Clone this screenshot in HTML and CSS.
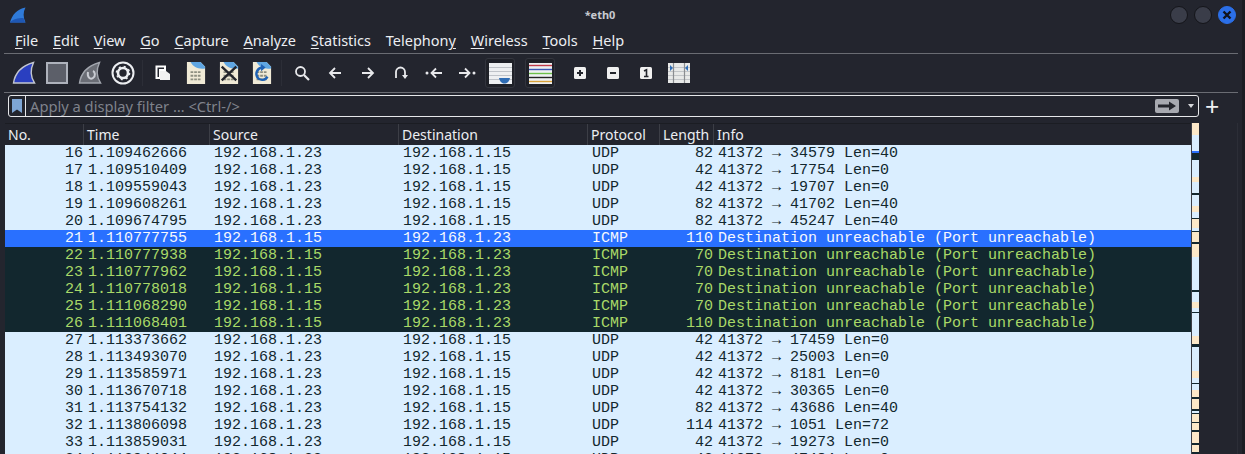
FILE: index.html
```html
<!DOCTYPE html>
<html>

<head>
  <title>*eth0</title>
  <meta charset="utf-8">
  <link rel="stylesheet" href="styles.css">
</head>

<body>

  <div class="window">

    <div class="titlebar">
      <svg class="app-icon" width="16" height="16" viewBox="0 0 16 16">
        <path d="M0 15.500 C2 8 7 2 15.500 0.500 C13 5 13 10 15.500 15.500 Z" fill="#2f7ad8" />
        <path d="M0 15.500 C3 12 8 11 13.500 11 C14 13 14.500 14 15.500 15.500 Z" fill="#1e57b4" />
      </svg>
      <div class="title">*eth0</div>
      <div class="wm-buttons">
        <span class="wm-btn"></span>
        <span class="wm-btn"></span>
        <span class="wm-btn wm-close">
          <svg width="10" height="10" viewBox="0 0 10 10">
            <path d="M1.500 1.500 L8.500 8.500 M8.500 1.500 L1.500 8.500" stroke="#10131c" stroke-width="2.400" />
          </svg>
        </span>
      </div>
    </div>

    <div class="menubar">
      <span class="menu"><u>F</u>ile</span>
      <span class="menu"><u>E</u>dit</span>
      <span class="menu"><u>V</u>iew</span>
      <span class="menu"><u>G</u>o</span>
      <span class="menu"><u>C</u>apture</span>
      <span class="menu"><u>A</u>nalyze</span>
      <span class="menu"><u>S</u>tatistics</span>
      <span class="menu">Telephon<u>y</u></span>
      <span class="menu"><u>W</u>ireless</span>
      <span class="menu"><u>T</u>ools</span>
      <span class="menu"><u>H</u>elp</span>
    </div>

    <div class="toolbar">
      <span class="tool">
        <svg width="24" height="24" viewBox="0 0 24 24">
          <path d="M1.500 22 C3 12 9 5 21.500 1.500 C18 9 18 15 22.500 22 Z" fill="#2a3fc0" stroke="#c3c7d0" stroke-width="1.400" />
        </svg>
      </span>
      <span class="tool">
        <svg width="24" height="24" viewBox="0 0 24 24">
          <rect x="2" y="2" width="20" height="20" fill="#5c5f69" stroke="#aeb2bc" stroke-width="2" />
        </svg>
      </span>
      <span class="tool">
        <svg width="24" height="24" viewBox="0 0 24 24">
          <path d="M1.500 22 C3 12 9 5 21.500 1.500 C18 9 18 15 22.500 22 Z" fill="#6a6d75" stroke="#a2a6ae" stroke-width="1.400" />
          <path d="M10 11 C9 16 12 19 15 17 C18 15 17 11 15 10" fill="none" stroke="#c9ccd3" stroke-width="2" />
        </svg>
      </span>
      <span class="tool">
        <svg width="24" height="24" viewBox="0 0 24 24">
          <circle cx="12" cy="12" r="10.500" fill="none" stroke="#eceef1" stroke-width="2" />
          <circle cx="12" cy="12" r="5" fill="none" stroke="#eceef1" stroke-width="2.600" />
          <circle cx="12" cy="12" r="6.500" fill="none" stroke="#eceef1" stroke-width="1.600" stroke-dasharray="2 3.100" />
        </svg>
      </span>
      <span class="tool-sep"></span>
      <span class="tool">
        <svg width="16" height="16" viewBox="0 0 16 16">
          <path d="M1.500 1.500 H10 V5 H5 V13 H1.500 Z" fill="none" stroke="#fff" stroke-width="2" />
          <path d="M5 6 H11 L15 9 V15 H5 Z" fill="#f2f2f2" />
        </svg>
      </span>
      <span class="tool">
        <svg width="20" height="24" viewBox="0 0 22 26">
          <path d="M1 1 H16 L21 6 V25 H1 Z" fill="#f0ead6" />
          <path d="M5 1 H16 L21 6 V8 C14 9 8 7 5 1 Z" fill="#5fa6e2" />
          <path d="M5 12 H17 M5 16 H17 M5 20 H17" stroke="#8d8f80" stroke-width="2" stroke-dasharray="3 1" />
        </svg>
      </span>
      <span class="tool">
        <svg width="20" height="24" viewBox="0 0 22 26">
          <path d="M1 1 H16 L21 6 V25 H1 Z" fill="#f0ead6" />
          <path d="M5 1 H16 L21 6 V8 C14 9 8 7 5 1 Z" fill="#5fa6e2" />
          <path d="M5 12 H17 M5 16 H17 M5 20 H17" stroke="#8d8f80" stroke-width="2" stroke-dasharray="3 1" />
          <path d="M3 6 L19 21 M19 6 L3 21" stroke="#23252c" stroke-width="2.600" />
        </svg>
      </span>
      <span class="tool">
        <svg width="20" height="24" viewBox="0 0 22 26">
          <path d="M1 1 H16 L21 6 V25 H1 Z" fill="#f0ead6" />
          <path d="M5 1 H16 L21 6 V8 C14 9 8 7 5 1 Z" fill="#5fa6e2" />
          <path d="M5 12 H17 M5 16 H17 M5 20 H17" stroke="#8d8f80" stroke-width="2" stroke-dasharray="3 1" />
          <path d="M12 7 C6 7 3 13 6 18 C9 22 15 21 17 17" fill="none" stroke="#1f62b4" stroke-width="2.600" />
          <path d="M10 3 L15 7 L10 11 Z" fill="#1f62b4" />
        </svg>
      </span>
      <span class="tool-sep"></span>
      <span class="tool">
        <svg width="16" height="16" viewBox="0 0 16 16">
          <circle cx="6.500" cy="6.500" r="4.500" fill="none" stroke="#e8e9ec" stroke-width="1.800" />
          <path d="M10 10 L15 15" stroke="#e8e9ec" stroke-width="2.200" />
        </svg>
      </span>
      <span class="tool">
        <svg width="16" height="16" viewBox="0 0 16 16">
          <path d="M14 8 H3 M8 3 L3 8 L8 13" fill="none" stroke="#e8e9ec" stroke-width="1.800" />
        </svg>
      </span>
      <span class="tool">
        <svg width="16" height="16" viewBox="0 0 16 16">
          <path d="M2 8 H13 M8 3 L13 8 L8 13" fill="none" stroke="#e8e9ec" stroke-width="1.800" />
        </svg>
      </span>
      <span class="tool">
        <svg width="16" height="16" viewBox="0 0 16 16">
          <path d="M3 13 V7 A4.500 4.500 0 0 1 12 7 V10" fill="none" stroke="#e8e9ec" stroke-width="1.800" />
          <path d="M9 10 H15 L12 14 Z" fill="#e8e9ec" />
        </svg>
      </span>
      <span class="tool">
        <svg width="18" height="16" viewBox="0 0 18 16">
          <circle cx="2" cy="8" r="1.500" fill="#e8e9ec" />
          <path d="M17 8 H7 M11 3.500 L6.500 8 L11 12.500" fill="none" stroke="#e8e9ec" stroke-width="1.800" />
        </svg>
      </span>
      <span class="tool">
        <svg width="18" height="16" viewBox="0 0 18 16">
          <circle cx="16" cy="8" r="1.500" fill="#e8e9ec" />
          <path d="M1 8 H11 M7 3.500 L11.500 8 L7 12.500" fill="none" stroke="#e8e9ec" stroke-width="1.800" />
        </svg>
      </span>
      <span class="tool tool--on">
        <svg width="23" height="21" viewBox="0 0 23 21">
          <rect x="0" y="0" width="23" height="21" fill="#eef0f2" />
          <path d="M0 4.500 H23 M0 8.500 H23 M0 12.500 H23 M0 16.500 H23" stroke="#bfc3c9" stroke-width="1" />
          <path d="M10 15 H21 C20 19 18 20.500 15.500 20.500 C13 20.500 11 19 10 15 Z" fill="#2f6db5" />
        </svg>
      </span>
      <span class="tool tool--on">
        <svg width="23" height="21" viewBox="0 0 23 21">
          <rect x="0" y="0" width="23" height="21" fill="#eef0f2" />
          <path d="M0 2.500 H23" stroke="#c23b4a" stroke-width="1.400" />
          <path d="M0 6.500 H23" stroke="#3a55b5" stroke-width="1.400" />
          <path d="M0 10.500 H23" stroke="#6cc04a" stroke-width="1.400" />
          <path d="M0 14.500 H23" stroke="#222" stroke-width="1.400" />
          <path d="M0 18.500 H23" stroke="#d8a23a" stroke-width="1.400" />
        </svg>
      </span>
      <span class="tool tool--first">
        <svg width="14" height="14" viewBox="0 0 14 14">
          <rect x="1" y="1" width="12" height="12" rx="1.500" fill="#f0f0f0" />
          <path d="M4 7 H10 M7 4 V10" stroke="#23252c" stroke-width="2" />
        </svg>
      </span>
      <span class="tool">
        <svg width="14" height="14" viewBox="0 0 14 14">
          <rect x="1" y="1" width="12" height="12" rx="1.500" fill="#f0f0f0" />
          <path d="M4 7 H10" stroke="#23252c" stroke-width="2" />
        </svg>
      </span>
      <span class="tool">
        <svg width="14" height="14" viewBox="0 0 14 14">
          <rect x="1" y="1" width="12" height="12" rx="1.500" fill="#f0f0f0" />
          <path d="M5 5 L7.500 3.800 V10.500 M5 10.500 H9.500" fill="none" stroke="#23252c" stroke-width="1.600" />
        </svg>
      </span>
      <span class="tool">
        <svg width="22" height="20" viewBox="0 0 22 20">
          <rect x="0" y="0" width="22" height="20" fill="#e8e9e8" />
          <path d="M0 4.500 H22 M0 8.500 H22 M0 12.500 H22 M0 16.500 H22" stroke="#c2c5c8" stroke-width="1" />
          <path d="M5.500 0 V20 M16.500 0 V20" stroke="#8a8d90" stroke-width="1.200" />
          <path d="M2 2 L5 5 L2 8 Z M20 2 L17 5 L20 8 Z" fill="#2f6db5" />
        </svg>
      </span>
    </div>

    <div class="filterbar">
      <div class="filter">
        <span class="filter-mark">
          <svg width="10" height="14" viewBox="0 0 10 14">
            <path d="M0 0 H10 V14 L5 10.500 L0 14 Z" fill="#7ea6d6" />
          </svg>
        </span>
        <span class="filter-text">Apply a display filter … &lt;Ctrl-/&gt;</span>
        <span class="filter-go">
          <svg width="18" height="10" viewBox="0 0 18 10">
            <path d="M0 3.500 H11 V0.500 L18 5 L11 9.500 V6.500 H0 Z" fill="#23252c" />
          </svg>
        </span>
        <span class="filter-drop"></span>
      </div>
      <span class="filter-plus">+</span>
    </div>

    <div class="packets">
      <div class="list">
        <div class="cols head">
          <span class="th">No.</span>
          <span class="th">Time</span>
          <span class="th">Source</span>
          <span class="th">Destination</span>
          <span class="th">Protocol</span>
          <span class="th">Length</span>
          <span class="th">Info</span>
        </div>
        <div class="rows">
          <div class="cols row"><span class="num">16</span><span>1.109462666</span><span>192.168.1.23</span><span>192.168.1.15</span><span>UDP</span><span class="num">82</span><span>41372 → 34579 Len=40</span></div>
          <div class="cols row"><span class="num">17</span><span>1.109510409</span><span>192.168.1.23</span><span>192.168.1.15</span><span>UDP</span><span class="num">42</span><span>41372 → 17754 Len=0</span></div>
          <div class="cols row"><span class="num">18</span><span>1.109559043</span><span>192.168.1.23</span><span>192.168.1.15</span><span>UDP</span><span class="num">42</span><span>41372 → 19707 Len=0</span></div>
          <div class="cols row"><span class="num">19</span><span>1.109608261</span><span>192.168.1.23</span><span>192.168.1.15</span><span>UDP</span><span class="num">82</span><span>41372 → 41702 Len=40</span></div>
          <div class="cols row"><span class="num">20</span><span>1.109674795</span><span>192.168.1.23</span><span>192.168.1.15</span><span>UDP</span><span class="num">82</span><span>41372 → 45247 Len=40</span></div>
          <div class="cols row row--sel"><span class="num">21</span><span>1.110777755</span><span>192.168.1.15</span><span>192.168.1.23</span><span>ICMP</span><span class="num">110</span><span>Destination unreachable (Port unreachable)</span></div>
          <div class="cols row row--err"><span class="num">22</span><span>1.110777938</span><span>192.168.1.15</span><span>192.168.1.23</span><span>ICMP</span><span class="num">70</span><span>Destination unreachable (Port unreachable)</span></div>
          <div class="cols row row--err"><span class="num">23</span><span>1.110777962</span><span>192.168.1.15</span><span>192.168.1.23</span><span>ICMP</span><span class="num">70</span><span>Destination unreachable (Port unreachable)</span></div>
          <div class="cols row row--err"><span class="num">24</span><span>1.110778018</span><span>192.168.1.15</span><span>192.168.1.23</span><span>ICMP</span><span class="num">70</span><span>Destination unreachable (Port unreachable)</span></div>
          <div class="cols row row--err"><span class="num">25</span><span>1.111068290</span><span>192.168.1.15</span><span>192.168.1.23</span><span>ICMP</span><span class="num">70</span><span>Destination unreachable (Port unreachable)</span></div>
          <div class="cols row row--err"><span class="num">26</span><span>1.111068401</span><span>192.168.1.15</span><span>192.168.1.23</span><span>ICMP</span><span class="num">110</span><span>Destination unreachable (Port unreachable)</span></div>
          <div class="cols row"><span class="num">27</span><span>1.113373662</span><span>192.168.1.23</span><span>192.168.1.15</span><span>UDP</span><span class="num">42</span><span>41372 → 17459 Len=0</span></div>
          <div class="cols row"><span class="num">28</span><span>1.113493070</span><span>192.168.1.23</span><span>192.168.1.15</span><span>UDP</span><span class="num">42</span><span>41372 → 25003 Len=0</span></div>
          <div class="cols row"><span class="num">29</span><span>1.113585971</span><span>192.168.1.23</span><span>192.168.1.15</span><span>UDP</span><span class="num">42</span><span>41372 → 8181 Len=0</span></div>
          <div class="cols row"><span class="num">30</span><span>1.113670718</span><span>192.168.1.23</span><span>192.168.1.15</span><span>UDP</span><span class="num">42</span><span>41372 → 30365 Len=0</span></div>
          <div class="cols row"><span class="num">31</span><span>1.113754132</span><span>192.168.1.23</span><span>192.168.1.15</span><span>UDP</span><span class="num">82</span><span>41372 → 43686 Len=40</span></div>
          <div class="cols row"><span class="num">32</span><span>1.113806098</span><span>192.168.1.23</span><span>192.168.1.15</span><span>UDP</span><span class="num">114</span><span>41372 → 1051 Len=72</span></div>
          <div class="cols row"><span class="num">33</span><span>1.113859031</span><span>192.168.1.23</span><span>192.168.1.15</span><span>UDP</span><span class="num">42</span><span>41372 → 19273 Len=0</span></div>
          <div class="cols row"><span class="num">34</span><span>1.113944044</span><span>192.168.1.23</span><span>192.168.1.15</span><span>UDP</span><span class="num">42</span><span>41372 → 47484 Len=0</span></div>
        </div>
      </div>
      <div class="minimap"></div>
      <div class="trough"></div>
    </div>

  </div>

</body>

</html>
```

FILE: styles.css
```css
* {
  box-sizing: border-box;
}

html,
body {
  margin: 0;
  height: 100%;
  overflow: hidden;
  background: #1b1d23;
}

.window {
  width: 1242px;
  height: 454px;
  padding: 0 4px;
  background: #23252e;
  font-family: "Noto Sans", sans-serif;
  color: #eceef2;
  overflow: hidden;
}

/* barra de titulo */
.titlebar {
  display: flex;
  align-items: center;
  height: 29px;
  padding-left: 6px;
  position: relative;
}

.title {
  position: absolute;
  left: 0;
  right: 42px;
  text-align: center;
  font-size: 11px;
  font-weight: 700;
  color: #c8cad0;
}

.wm-buttons {
  margin-left: auto;
  display: flex;
  gap: 6px;
  margin-right: 2px;
}

.wm-btn {
  display: flex;
  align-items: center;
  justify-content: center;
  width: 18px;
  height: 18px;
  border-radius: 50%;
  background: #3a3d49;
  border: 1px solid #14151a;
}

.wm-close {
  background: #2b6fe8;
  border-color: #2b6fe8;
}

/* menu */
.menubar {
  display: flex;
  align-items: center;
  gap: 14.800px;
  height: 25px;
  padding: 0 0 2px 11px;
  border-bottom: 1px solid #6a6c73;
  font-size: 14.500px;
}

.menu u {
  text-underline-offset: 2px;
}

/* barra de ferramentas */
.toolbar {
  display: flex;
  align-items: center;
  height: 39px;
  padding-left: 3px;
  border-bottom: 1px solid #6a6c73;
}

.tool {
  display: flex;
  align-items: center;
  justify-content: center;
  flex: none;
  width: 33px;
  height: 30px;
}

.tool svg {
  flex: none;
}

.tool-sep {
  flex: none;
  width: 1px;
  height: 26px;
  margin: 0 3px;
  background: #2c2e37;
}

.tool--on {
  width: 30px;
  margin-left: 2px;
  margin-right: 8px;
  background: #1f2128;
  border: 1px solid #33353e;
  border-radius: 3px;
}

.tool--first {
  margin-left: 0;
}

/* filtro */
.filterbar {
  display: flex;
  align-items: center;
  height: 30px;
  padding: 0 0 4px 4px;
}

.filter {
  display: flex;
  align-items: center;
  width: 1191px;
  height: 22px;
  border: 1px solid #e6e7ea;
  border-radius: 3px;
  background: #23252e;
}

.filter-mark {
  display: flex;
  align-items: center;
  justify-content: center;
  width: 17px;
  height: 20px;
  border-right: 1px solid #e6e7ea;
}

.filter-text {
  margin-left: 4px;
  font-size: 14.700px;
  color: #7f828b;
}

.filter-go {
  display: flex;
  align-items: center;
  justify-content: center;
  margin-left: auto;
  width: 24px;
  height: 14px;
  border-radius: 2px;
  background: #a7a9b0;
}

.filter-drop {
  margin: 0 4px 0 9px;
  border-left: 3px solid transparent;
  border-right: 3px solid transparent;
  border-top: 4px solid #d6d7db;
}

.filter-plus {
  margin-left: 6px;
  font-size: 25px;
  line-height: 20px;
  color: #f0f0f2;
}

/* lista de pacotes */
.packets {
  display: flex;
  height: 331px;
}

.list {
  width: 1187px;
  margin-left: 1px;
  flex: none;
  border-right: 1px solid #3c3e46;
}

.cols {
  display: grid;
  grid-template-columns: 78px 126px 189px 189px 72px 54px 1fr;
}

.head {
  height: 22px;
  background: #23252e;
  border-top: 1px solid #1b1d23;
  font-size: 14px;
  line-height: 21px;
}

.th {
  padding-left: 3px;
  border-left: 1px solid #3c3e46;
}

.th:first-child {
  border-left: 0;
}

.rows {
  height: 309px;
  overflow: hidden;
  background: #daeeff;
}

.row {
  height: 17px;
  font-family: "Liberation Mono", monospace;
  font-size: 15px;
  line-height: 17px;
  color: #12272e;
  background: #daeeff;
  white-space: pre;
}

.row span {
  padding-left: 5px;
}

.row .num {
  padding: 0;
  text-align: right;
}

.row--sel {
  background: #2970ff;
  color: #f6f8fd;
}

.row--err {
  background: #12272e;
  color: #a9d968;
}

/* minimapa */
.minimap {
  width: 7px;
  flex: none;
  background: linear-gradient(to bottom,
      #fce8c8 0 12px, #daeeff 12px 28px,
      #2970ff 28px 30px, #12272e 30px 37px,
      #daeeff 37px 54px, #fce8c8 54px 59px,
      #daeeff 59px 70px, #12272e 70px 72px,
      #daeeff 72px 83px, #fce8c8 83px 89px,
      #daeeff 89px 95px, #12272e 95px 96px,
      #fce8c8 96px 105px, #daeeff 105px 108px,
      #12272e 108px 109px, #fce8c8 109px 119px,
      #12272e 119px 121px, #fce8c8 121px 134px,
      #daeeff 134px 167px, #12272e 167px 169px,
      #daeeff 169px 179px, #fce8c8 179px 185px,
      #daeeff 185px 189px, #12272e 189px 190px,
      #daeeff 190px 213px, #fce8c8 213px 221px,
      #12272e 221px 224px, #daeeff 224px 248px,
      #fce8c8 248px 255px, #daeeff 255px 260px,
      #12272e 260px 261px, #daeeff 261px 267px,
      #fce8c8 267px 274px, #12272e 274px 276px,
      #fce8c8 276px 286px, #12272e 286px 288px,
      #daeeff 288px 290px, #12272e 290px 291px,
      #fce8c8 291px 299px, #12272e 299px 300px,
      #fce8c8 300px 307px, #12272e 307px 309px,
      #fce8c8 309px 320px, #12272e 320px 322px,
      #fce8c8 322px 329px, #12272e 329px 331px);
}

.trough {
  flex: 1;
  background: #23252e;
  border-right: 1px solid #2c2e37;
}
```
